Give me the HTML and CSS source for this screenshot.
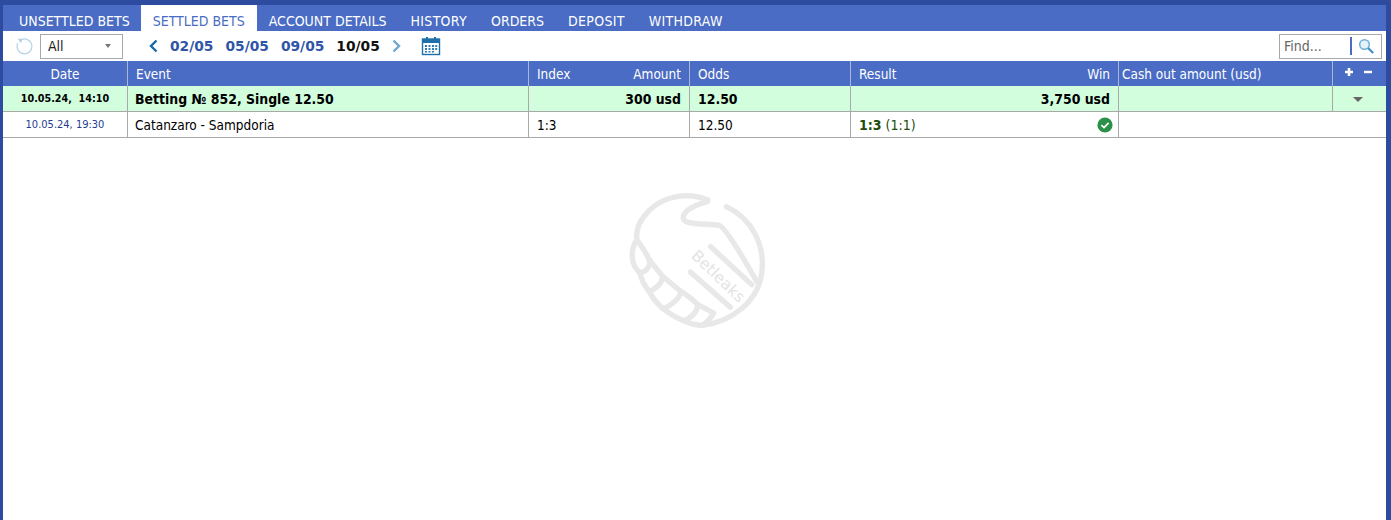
FILE: index.html
```html
<!DOCTYPE html>
<html lang="en">
<head>
    <meta charset="UTF-8">
    <title>Settled bets</title>
    <link rel="stylesheet" href="styles.css">
</head>
<body>
    <div class="tabs">
        <a class="tab first">UNSETTLED BETS</a>
        <a class="tab active">SETTLED BETS</a>
        <a class="tab">ACCOUNT DETAILS</a>
        <a class="tab wide">HISTORY</a>
        <a class="tab">ORDERS</a>
        <a class="tab wide">DEPOSIT</a>
        <a class="tab wide">WITHDRAW</a>
    </div>
    <div class="toolbar">
        <svg class="refresh" width="18" height="18" viewBox="0 0 18 18">
            <path d="M5.5 2.6A7.4 7.4 0 1 1 1.9 6" fill="none" stroke="#b4d4e6" stroke-width="1.2"/>
            <path d="M1.6 1.6L6.6 2L4.9 6.2Z" fill="#b4d4e6"/>
        </svg>
        <div class="select"><span>All</span><i class="select-arrow"></i></div>
        <div class="dates">
            <svg class="chevron" width="11" height="14" viewBox="0 0 11 14">
                <path d="M8.5 1.5L3 7L8.5 12.5" fill="none" stroke="#1769a8" stroke-width="2.4"/>
            </svg>
            <a class="date">02/05</a>
            <a class="date">05/05</a>
            <a class="date">09/05</a>
            <a class="date current">10/05</a>
            <svg class="chevron" width="11" height="14" viewBox="0 0 11 14">
                <path d="M2.5 1.5L8 7L2.5 12.5" fill="none" stroke="#6fa9cf" stroke-width="2.4"/>
            </svg>
            <svg class="calendar" width="20" height="20" viewBox="0 0 20 20">
                <rect x="1.5" y="3" width="17" height="15.5" fill="#fff" stroke="#1f6fa8" stroke-width="1.4"/>
                <rect x="1" y="3" width="18" height="4" fill="#1f6fa8"/>
                <rect x="5" y="1" width="2" height="4" fill="#1f6fa8"/>
                <rect x="13" y="1" width="2" height="4" fill="#1f6fa8"/>
                <path d="M4 9h2v2H4zM7.5 9h2v2h-2zM11 9h2v2h-2zM14.2 9h2v2h-2zM4 12h2v2H4zM7.5 12h2v2h-2zM11 12h2v2h-2zM14.2 12h2v2h-2zM4 15h2v1.6H4zM7.5 15h2v1.6h-2zM11 15h2v1.6h-2z" fill="#2c7db5"/>
            </svg>
        </div>
        <div class="search">
            <span class="search-label">Find...</span>
            <i class="search-sep"></i>
            <svg width="17" height="17" viewBox="0 0 17 17">
                <circle cx="6.5" cy="6.5" r="4.8" fill="#e6f2f9" stroke="#6fb0d6" stroke-width="1.5"/>
                <path d="M10 10L15.2 15" stroke="#3f8fc0" stroke-width="2.2"/>
            </svg>
        </div>
    </div>
    <div class="content">
        <table class="bets">
            <colgroup>
                <col class="c-date"><col class="c-event"><col class="c-index"><col class="c-amount">
                <col class="c-odds"><col class="c-result"><col class="c-win"><col class="c-cash"><col class="c-ctrl">
            </colgroup>
            <thead>
                <tr>
                    <th class="center">Date</th>
                    <th>Event</th>
                    <th class="joined">Index</th>
                    <th class="right">Amount</th>
                    <th>Odds</th>
                    <th class="joined">Result</th>
                    <th class="right">Win</th>
                    <th class="cash">Cash out amount (usd)</th>
                    <th class="center ctrl">
                        <span class="ctrl-btns">
                            <svg width="8" height="8" viewBox="0 0 8 8"><path d="M2.7 0h2.6v2.7H8v2.6H5.3V8H2.7V5.3H0V2.7h2.7z" fill="#fff"/></svg>
                            <svg width="8" height="8" viewBox="0 0 8 8"><path d="M0 2.8h8v2.4H0z" fill="#fff"/></svg>
                        </span>
                    </th>
                </tr>
            </thead>
            <tbody>
                <tr class="bet">
                    <td class="center when">10.05.24,&nbsp; 14:10</td>
                    <td class="event">Betting № 852, Single 12.50</td>
                    <td class="joined"></td>
                    <td class="right">300 usd</td>
                    <td>12.50</td>
                    <td class="joined"></td>
                    <td class="right">3,750 usd</td>
                    <td></td>
                    <td class="center ctrl"><i class="row-arrow"></i></td>
                </tr>
                <tr class="leg">
                    <td class="center when">10.05.24, 19:30</td>
                    <td class="event">Catanzaro - Sampdoria</td>
                    <td class="joined">1:3</td>
                    <td></td>
                    <td>12.50</td>
                    <td class="joined score"><b>1:3</b> (1:1)</td>
                    <td class="right">
                        <svg class="check" width="16" height="16" viewBox="0 0 16 16">
                            <circle cx="8" cy="8" r="7.6" fill="#2b9148"/>
                            <path d="M4.4 8.2L7 10.6L11.6 5.8" fill="none" stroke="#fff" stroke-width="1.7"/>
                        </svg>
                    </td>
                    <td class="joined"></td>
                    <td></td>
                </tr>
            </tbody>
        </table>
        <svg class="watermark" width="145" height="145" viewBox="0 0 435 435">
            <g fill="none" stroke="#e8e8e8" stroke-width="16" stroke-linecap="round" stroke-linejoin="round">
                <!-- ball outline -->
                <path d="M248 36C190 12 118 22 72 68C44 96 32 125 35 155"/>
                <path d="M304 56C380 92 422 170 410 256C398 340 322 402 232 412"/>
                <!-- hand -->
                <path d="M248 40C205 52 168 72 176 94C184 112 250 106 282 112C300 118 352 204 396 282"/>
                <path d="M257 176L380 290"/>
                <path d="M196 252L316 358"/>
                <!-- stitched left edge -->
                <path d="M35 155C14 190 18 232 44 254C66 252 78 232 72 214C64 196 52 178 35 155"/>
                <path d="M72 214C84 232 100 246 112 264C114 284 92 304 72 310C58 292 48 272 44 254"/>
                <path d="M112 264C130 280 150 296 168 310C164 334 136 354 114 362C96 346 82 328 72 310"/>
                <path d="M168 310C186 322 204 334 218 350C216 374 196 390 176 398C154 390 132 376 114 362"/>
                <path d="M176 398C196 408 214 412 232 412C246 402 258 390 266 376C250 366 234 358 218 350"/>
            </g>
            <text class="watermark-text" transform="translate(196 206) rotate(44)">Betleaks</text>
        </svg>
    </div>
</body>
</html>
```

FILE: styles.css
```css
html, body {
    height: 100%;
}
body {
    margin: 0;
    padding: 0 5px 0 3px;
    box-sizing: border-box;
    background: #2d4c9f;
    font-family: "DejaVu Sans Condensed", "DejaVu Sans", sans-serif;
    font-size: 13.5px;
    color: #000;
    display: flex;
    flex-direction: column;
    overflow: hidden;
}
.tabs {
    margin-top: 5px;
    height: 26px;
    background: #4a6cc4;
    display: flex;
    padding-left: 4px;
    flex: none;
}
.tab {
    color: #fff;
    font-size: 14px;
    padding: 9px 12px 0;
    height: 17px;
    line-height: 15px;
}
.tab.first {
    padding-right: 11px;
}
.tab.wide {
    letter-spacing: 0.3px;
}
.tab.active {
    background: #fff;
    color: #4a6cc4;
}
.toolbar {
    height: 30px;
    background: #fff;
    display: flex;
    align-items: center;
    flex: none;
}
.refresh {
    margin-left: 13px;
}
.select {
    width: 83px;
    height: 25px;
    margin-left: 6px;
    border: 1px solid #a8a8a8;
    display: flex;
    align-items: center;
    justify-content: space-between;
    padding: 0 11px 0 7px;
    box-sizing: border-box;
    color: #222;
    font-size: 14px;
}
.select-arrow {
    width: 0;
    height: 0;
    border-left: 3px solid transparent;
    border-right: 3px solid transparent;
    border-top: 4px solid #777;
}
.dates {
    display: flex;
    align-items: center;
    margin-left: 25px;
}
.date {
    font-family: "DejaVu Sans", sans-serif;
    font-weight: bold;
    font-size: 13.8px;
    color: #2f55a8;
    margin-left: 12px;
}
.chevron + .date {
    margin-left: 11px;
}
.date.current {
    color: #111;
}
.date + .chevron {
    margin-left: 11px;
}
.calendar {
    margin-left: 19px;
}
.search {
    margin-left: auto;
    margin-right: 4px;
    width: 103px;
    height: 25px;
    border: 1px solid #a8a8a8;
    box-sizing: border-box;
    display: flex;
    align-items: center;
    padding-left: 4px;
}
.search-label {
    color: #666;
    font-size: 14px;
    width: 66px;
}
.search-sep {
    width: 2px;
    height: 18px;
    background: #4a6cc4;
    margin-right: 6px;
}
.content {
    flex: 1;
    background: #fff;
    position: relative;
}
.bets {
    width: 1383px;
    table-layout: fixed;
    border-collapse: separate;
    border-spacing: 0;
}
.c-date { width: 125px; }
.c-event { width: 401px; }
.c-index { width: 80px; }
.c-amount { width: 81px; }
.c-odds { width: 161px; }
.c-result { width: 120px; }
.c-win { width: 148px; }
.c-cash { width: 214px; }
.c-ctrl { width: 53px; }
.bets th, .bets td {
    padding: 0 8px;
    border-right: 1px solid #a9a9a9;
    text-align: left;
    white-space: nowrap;
    overflow: hidden;
}
.bets th {
    height: 25px;
    padding-top: 1px;
    box-sizing: border-box;
    background: #4a6cc4;
    color: #fff;
    font-weight: normal;
    border-right-color: #a9b6d8;
}
.bets td {
    border-bottom: 1px solid #a9a9a9;
}
.bets th:last-child, .bets td:last-child {
    border-right: 0;
}
.bets .center { text-align: center; padding: 0; }
.bets .right { text-align: right; }
.bets .joined { border-right: 0; }
.bets .cash { padding: 0 3px; }
.bets .event { padding-left: 7px; }
.bets .ctrl { padding-right: 3px; }
.bet td {
    height: 25px;
    background: #d2fedd;
    font-size: 13.9px;
    font-weight: bold;
}
.bet .when {
    font-size: 10.7px;
}
.leg td {
    height: 25px;
}
.leg .when {
    font-size: 11px;
    color: #1f3d8f;
}
.score {
    color: #1c4d0c;
    font-size: 14px;
}
.check {
    display: block;
    margin: 0 -3px 0 auto;
}
.ctrl-btns {
    display: flex;
    justify-content: center;
    gap: 11px;
    margin-top: -3px;
}
.row-arrow {
    display: inline-block;
    width: 0;
    height: 0;
    border-left: 5px solid transparent;
    border-right: 5px solid transparent;
    border-top: 5px solid #666;
    margin-bottom: 2px;
}
.watermark {
    position: absolute;
    left: 622px;
    top: 127px;
}
.watermark-text {
    font-size: 47px;
    fill: #e4e4e4;
    font-family: "DejaVu Sans", sans-serif;
}
```
